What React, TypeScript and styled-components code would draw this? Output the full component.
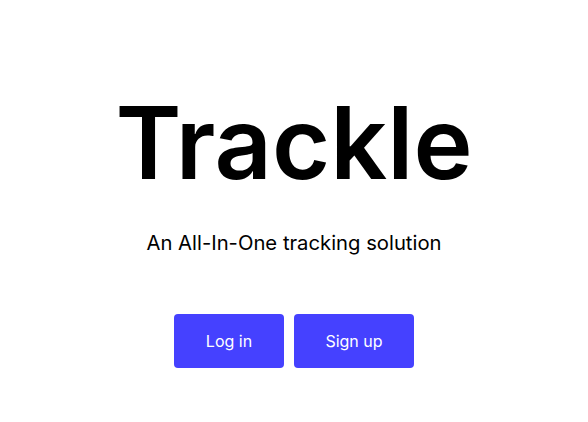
import React from "react";
import styled, { createGlobalStyle } from "styled-components";

const Global = createGlobalStyle`
  html, body { margin: 0; padding: 0; background: #ffffff; }
  body { font-family: Inter, "Noto Sans", sans-serif; color: #000; }
`;

const Page = styled.main`
  display: flex;
  flex-direction: column;
  align-items: center;
  padding-top: 93px;
`;

const Title = styled.h1`
  margin: 0;
  font-size: 100px;
  line-height: 100px;
  font-weight: 600;
  letter-spacing: 0;
`;

const Subtitle = styled.p`
  margin: 38px 0 0;
  font-size: 20.25px;
  line-height: 24px;
  font-weight: 400;
`;

const Actions = styled.div`
  display: flex;
  gap: 10px;
  margin-top: 59px;
`;

const Button = styled.button<{ $w: number }>`
  width: ${(p) => p.$w}px;
  height: 54px;
  border: none;
  border-radius: 4px;
  background: #4541ff;
  color: #ffffff;
  font-family: Inter, "Noto Sans", sans-serif;
  font-size: 16px;
  font-weight: 400;
  cursor: pointer;
`;

export default function App() {
  return (
    <>
      <Global />
      <Page>
        <Title>Trackle</Title>
        <Subtitle>An All-In-One tracking solution</Subtitle>
        <Actions>
          <Button $w={110}>Log in</Button>
          <Button $w={120}>Sign up</Button>
        </Actions>
      </Page>
    </>
  );
}
